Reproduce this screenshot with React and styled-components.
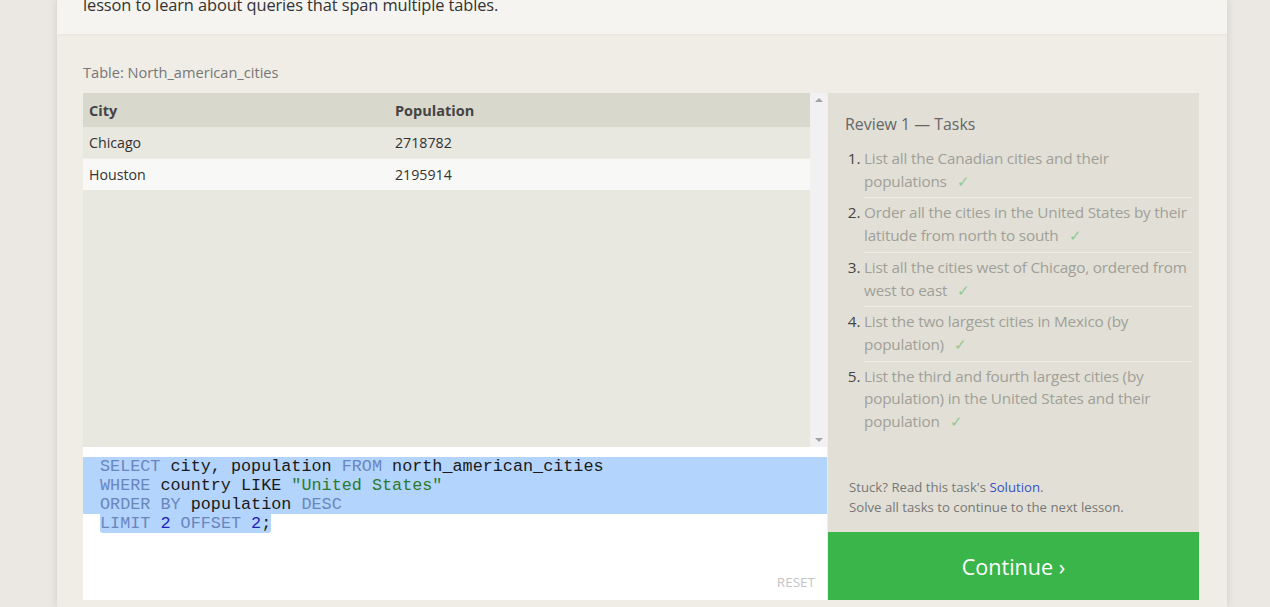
import React from "react";
import styled, { createGlobalStyle } from "styled-components";

const Global = createGlobalStyle`
  html, body { margin: 0; padding: 0; }
  body {
    background: #ebe8e4;
    font-family: "Open Sans", "Noto Sans", sans-serif;
    height: 607px;
    overflow: hidden;
  }
`;

const Page = styled.div`
  width: 1170px;
  margin: 0 0 0 57px;
  box-shadow: 0 0 8px rgba(0, 0, 0, 0.12);
  height: 607px;
  overflow: hidden;
  display: flex;
  flex-direction: column;
`;

const Lesson = styled.div`
  background: #f5f4f0;
  height: 34px;
  padding: 0 26px;
  box-sizing: border-box;
  overflow: hidden;
  box-shadow: 0 1px 2px rgba(0, 0, 0, 0.04);
  position: relative;
  z-index: 1;
`;

const LessonText = styled.p`
  margin: -7px 0 0;
  font-size: 16.4px;
  line-height: 24px;
  color: #333;
  letter-spacing: -0.1px;
`;

const Exercise = styled.div`
  flex: 1;
  background: #efede6;
  padding: 28px 28px 0 26px;
`;

const TableLabel = styled.div`
  font-size: 14.6px;
  color: #777;
  line-height: 20px;
  margin-bottom: 11px;
`;

const Grid = styled.div`
  display: grid;
  grid-template-columns: 744px 1fr;
`;

const Left = styled.div`
  display: flex;
  flex-direction: column;
`;

const TableArea = styled.div`
  height: 354px;
  display: flex;
  background: #e8e7e0;
`;

const TableScroll = styled.div`
  flex: 1;
`;

const DataTable = styled.table`
  width: 100%;
  border-collapse: collapse;
  font-size: 14px;
  color: #333;
`;

const Th = styled.th`
  text-align: left;
  font-weight: 700;
  background: #d9d8cd;
  height: 34px;
  padding: 0 6px;
  font-size: 14.5px;
  color: #444;
  width: ${(p) => p.$w || "auto"};
`;

const Tr = styled.tr`
  background: ${(p) => (p.$alt ? "#f8f8f6" : "#e8e7e0")};
  border-top: ${(p) => (p.$alt ? "1px solid #efeee9" : "none")};
`;

const Td = styled.td`
  height: 31px;
  padding: 0 6px;
  font-size: 14.2px;
  color: #333;
`;

const Scrollbar = styled.div`
  width: 17px;
  background: #f1f1f1;
  display: flex;
  flex-direction: column;
  justify-content: space-between;
  align-items: center;
  padding: 5px 0;
  box-sizing: border-box;
`;

const Arrow = styled.div`
  width: 0;
  height: 0;
  border-left: 4px solid transparent;
  border-right: 4px solid transparent;
  ${(p) =>
    p.$down
      ? "border-top: 4px solid #a3a3a3;"
      : "border-bottom: 4px solid #a3a3a3;"}
`;

const Editor = styled.div`
  height: 153px;
  background: #fff;
  position: relative;
  padding-top: 10px;
  box-sizing: border-box;
`;

const Code = styled.pre`
  margin: 0;
  font-family: "Liberation Mono", "Courier New", monospace;
  font-size: 16.8px;
  line-height: 19px;
  color: #1a1a1a;
`;

const Line = styled.div`
  padding-left: 17px;
  background: ${(p) => (p.$sel ? "#b3d4fc" : "transparent")};
`;

const SelInline = styled.span`
  background: #b3d4fc;
  border-radius: 0 0 3px 3px;
  display: inline-block;
`;

const LastLine = styled.div`
  padding-left: 17px;
`;

const Kw = styled.span`
  color: #6a86bd;
`;
const Str = styled.span`
  color: #2c7a2c;
`;
const Num = styled.span`
  color: #1f22b8;
`;

const Reset = styled.div`
  position: absolute;
  right: 12px;
  bottom: 9px;
  font-size: 13.5px;
  color: #c4c4c4;
`;

const Right = styled.div`
  display: flex;
  flex-direction: column;
  margin-left: 1px;
`;

const TasksPanel = styled.div`
  height: 439px;
  background: #e2e0d6;
  padding: 20px 7px 0 17px;
  box-sizing: border-box;
  display: flex;
  flex-direction: column;
`;

const TasksTitle = styled.div`
  font-size: 15.9px;
  color: #666;
  line-height: 22px;
  margin-bottom: 9px;
`;

const TaskList = styled.ol`
  margin: 0;
  padding: 0 0 0 19px;
  flex: 1;
`;

const Task = styled.li`
  font-size: 15.3px;
  line-height: 22.7px;
  color: #a09f99;
  padding: 3px 0 5px;
  border-top: ${(p) => (p.$first ? "none" : "1px solid #ecebe4")};
  letter-spacing: -0.2px;
  &::marker {
    color: #444;
  }
`;

const Check = styled.span`
  color: #8fc98f;
  margin-left: 10px;
`;

const Help = styled.div`
  font-size: 13.2px;
  color: #777;
  line-height: 20px;
  padding: 0 0 15px 4px;
`;

const Link = styled.span`
  color: #3650c6;
`;

const Continue = styled.button`
  height: 68px;
  border: none;
  background: #3ab54a;
  color: #fff;
  font-family: "Open Sans", "Noto Sans", sans-serif;
  font-size: 21.6px;
  cursor: pointer;
  padding: 0;
`;

const tasks = [
  "List all the Canadian cities and their populations",
  "Order all the cities in the United States by their latitude from north to south",
  "List all the cities west of Chicago, ordered from west to east",
  "List the two largest cities in Mexico (by population)",
  "List the third and fourth largest cities (by population) in the United States and their population",
];

export default function App() {
  return (
    <>
      <Global />
      <Page>
        <Lesson>
          <LessonText>lesson to learn about queries that span multiple tables.</LessonText>
        </Lesson>
        <Exercise>
          <TableLabel>Table: North_american_cities</TableLabel>
          <Grid>
            <Left>
              <TableArea>
                <TableScroll>
                  <DataTable>
                    <thead>
                      <tr>
                        <Th $w="294px">City</Th>
                        <Th>Population</Th>
                      </tr>
                    </thead>
                    <tbody>
                      <Tr>
                        <Td>Chicago</Td>
                        <Td>2718782</Td>
                      </Tr>
                      <Tr $alt>
                        <Td>Houston</Td>
                        <Td>2195914</Td>
                      </Tr>
                    </tbody>
                  </DataTable>
                </TableScroll>
                <Scrollbar>
                  <Arrow />
                  <Arrow $down />
                </Scrollbar>
              </TableArea>
              <Editor>
                <Code>
                  <Line $sel>
                    <Kw>SELECT</Kw> city, population <Kw>FROM</Kw> north_american_cities
                  </Line>
                  <Line $sel>
                    <Kw>WHERE</Kw> country LIKE <Str>"United States"</Str>
                  </Line>
                  <Line $sel>
                    <Kw>ORDER</Kw> <Kw>BY</Kw> population <Kw>DESC</Kw>
                  </Line>
                  <LastLine>
                    <SelInline>
                      <Kw>LIMIT</Kw> <Num>2</Num> <Kw>OFFSET</Kw> <Num>2</Num>;
                    </SelInline>
                  </LastLine>
                </Code>
                <Reset>RESET</Reset>
              </Editor>
            </Left>
            <Right>
              <TasksPanel>
                <TasksTitle>Review 1 — Tasks</TasksTitle>
                <TaskList>
                  {tasks.map((t, i) => (
                    <Task key={i} $first={i === 0}>
                      {t}
                      <Check>✓</Check>
                    </Task>
                  ))}
                </TaskList>
                <Help>
                  Stuck? Read this task's <Link>Solution</Link>.
                  <br />
                  Solve all tasks to continue to the next lesson.
                </Help>
              </TasksPanel>
              <Continue>Continue ›</Continue>
            </Right>
          </Grid>
        </Exercise>
      </Page>
    </>
  );
}
